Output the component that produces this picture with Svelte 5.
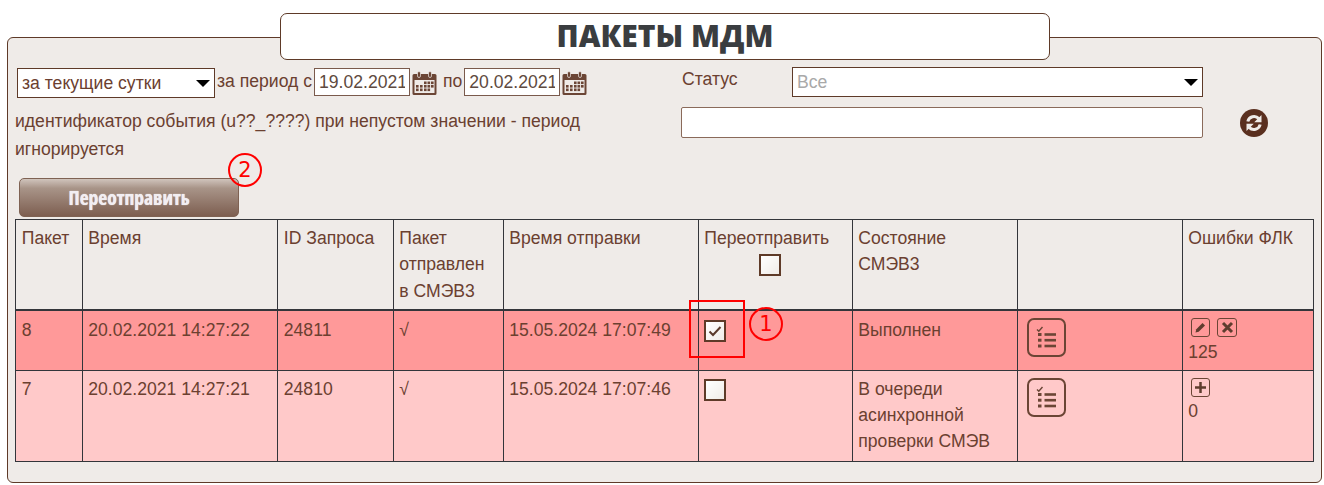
<script>
  const rows = [
    { id: '8', time: '20.02.2021 14:27:22', req: '24811', sent: '15.05.2024 17:07:49', checked: true, state: ['Выполнен'], cls: 'r1', errs: '125', edit: true },
    { id: '7', time: '20.02.2021 14:27:21', req: '24810', sent: '15.05.2024 17:07:46', checked: false, state: ['В очереди', 'асинхронной', 'проверки СМЭВ'], cls: 'r2', errs: '0', edit: false }
  ];
</script>

{#snippet cal()}
  <svg class="cal" width="25" height="24" viewBox="0 0 25 24">
    <path d="M2 3h21a1.500 1.500 0 0 1 1.500 1.500V22.500a1.500 1.500 0 0 1-1.500 1.500H2a1.500 1.500 0 0 1-1.500-1.500V4.500A1.500 1.500 0 0 1 2 3z" fill="#6b4535"/>
    <rect x="2.500" y="9" width="20" height="13" fill="#efebe8"/>
    <rect x="5.500" y="0.500" width="3" height="6" rx="1.500" fill="#6b4535" stroke="#efebe8" stroke-width="0.700"/>
    <rect x="16.500" y="0.500" width="3" height="6" rx="1.500" fill="#6b4535" stroke="#efebe8" stroke-width="0.700"/>
    <g fill="#6b4535">
      <rect x="12" y="10.500" width="2.600" height="2.600"/><rect x="15.500" y="10.500" width="2.600" height="2.600"/><rect x="19" y="10.500" width="2.600" height="2.600"/>
      <rect x="4" y="14" width="2.600" height="2.600"/><rect x="8" y="14" width="2.600" height="2.600"/><rect x="12" y="14" width="2.600" height="2.600"/><rect x="15.500" y="14" width="2.600" height="2.600"/><rect x="19" y="14" width="2.600" height="2.600"/>
      <rect x="4" y="17.500" width="2.600" height="2.600"/><rect x="8" y="17.500" width="2.600" height="2.600"/><rect x="12" y="17.500" width="2.600" height="2.600"/><rect x="15.500" y="17.500" width="2.600" height="2.600"/>
    </g>
  </svg>
{/snippet}

{#snippet listIcon()}
  <svg width="21" height="23" viewBox="0 0 21 23">
    <path d="M1 3.500l1.800 1.800L6.500 1" fill="none" stroke="#6b4535" stroke-width="1.400"/>
    <g fill="#6b4535">
      <rect x="2" y="7" width="3.500" height="3"/><rect x="2" y="12.700" width="3.500" height="3"/><rect x="2" y="18.500" width="3.500" height="3"/>
      <rect x="8.500" y="7.200" width="11.500" height="2.600"/><rect x="8.500" y="12.900" width="11.500" height="2.600"/><rect x="8.500" y="18.700" width="11.500" height="2.600"/>
    </g>
  </svg>
{/snippet}

<div class="page">
  <h1 class="title">ПАКЕТЫ МДМ</h1>
  <section class="panel">
    <div class="filters">
      <div class="left">
        <div class="period">
          <span class="selwrap"><select class="sel-period"><option>за текущие сутки</option></select><i class="arrow"></i></span>
          <span class="lbl">за период с</span>
          <input class="date" value="19.02.2021" />
          {@render cal()}
          <span class="lbl po">по</span>
          <input class="date" value="20.02.2021" />
          {@render cal()}
        </div>
        <p class="hint">идентификатор события (u??_????) при непустом значении - период игнорируется</p>
      </div>
      <div class="right">
        <div class="status">
          <span class="status-lbl">Статус</span>
          <span class="selwrap"><select class="sel-status"><option>Все</option></select><i class="arrow"></i></span>
        </div>
        <div class="search">
          <input class="event" />
          <svg class="refresh" width="28" height="28" viewBox="0 0 28 28">
            <circle cx="14" cy="14" r="14" fill="#5a2f1f"/>
            <g fill="none" stroke="#efebe8" stroke-width="3">
              <path d="M7.800 12.500A6.500 6.500 0 0 1 18.800 9.600"/>
              <path d="M20.200 15.500A6.500 6.500 0 0 1 9.200 18.400"/>
            </g>
            <path d="M21.500 6v7.300h-7.300zM6.500 22v-7.300h7.300z" fill="#efebe8"/>
          </svg>
        </div>
      </div>
    </div>

    <div class="action">
      <button class="resend">Переотправить</button>
      <span class="mark m2">2</span>
    </div>

    <table>
      <colgroup>
        <col style="width:67px" /><col style="width:195px" /><col style="width:116px" /><col style="width:110px" /><col style="width:195px" /><col style="width:154px" /><col style="width:165px" /><col style="width:165px" /><col style="width:131px" />
      </colgroup>
      <thead>
        <tr>
          <th>Пакет</th>
          <th>Время</th>
          <th>ID Запроса</th>
          <th>Пакет отправлен в СМЭВ3</th>
          <th>Время отправки</th>
          <th>Переотправить<span class="box head-box"></span></th>
          <th>Состояние СМЭВ3</th>
          <th></th>
          <th>Ошибки ФЛК</th>
        </tr>
      </thead>
      <tbody>
        {#each rows as r}
          <tr class={r.cls}>
            <td>{r.id}</td>
            <td>{r.time}</td>
            <td>{r.req}</td>
            <td>√</td>
            <td>{r.sent}</td>
            <td class="chk">
              <span class="box">
                {#if r.checked}
                  <svg width="14" height="12" viewBox="0 0 14 12"><path d="M1.500 6.500l3.500 3.500L12.500 2" fill="none" stroke="#5a3a2b" stroke-width="2"/></svg>
                {/if}
              </span>
              {#if r.checked}
                <span class="red-frame"></span>
                <span class="mark m1">1</span>
              {/if}
            </td>
            <td>{#each r.state as s}<div>{s}</div>{/each}</td>
            <td><button class="listbtn">{@render listIcon()}</button></td>
            <td>
              <div class="mini">
                {#if r.edit}
                  <button class="tiny"><svg width="13" height="13" viewBox="0 0 13 13"><path d="M1.500 11.500l0.800-3.200L8.500 2l2.500 2.500-6.300 6.200z" fill="#5f3d2e"/></svg></button>
                  <button class="tiny wide"><svg width="13" height="13" viewBox="0 0 13 13"><path d="M2 2l9 9M11 2l-9 9" stroke="#5f3d2e" stroke-width="3"/></svg></button>
                {:else}
                  <button class="tiny"><svg width="13" height="13" viewBox="0 0 13 13"><path d="M6.500 1v11M1 6.500h11" stroke="#5f3d2e" stroke-width="2.500"/></svg></button>
                {/if}
              </div>
              <div class="num">{r.errs}</div>
            </td>
          </tr>
        {/each}
      </tbody>
    </table>
  </section>
</div>

<style>
  :global(body) { margin: 0; background: #fff; }
  .page {
    width: 1324px; height: 485px; overflow: hidden; box-sizing: border-box;
    padding: 13px 2px 0 7px;
    font: 17.6px/26.4px "Liberation Sans", Arial, sans-serif;
    color: #6b4030;
  }
  .title {
    position: relative; z-index: 1; box-sizing: border-box;
    width: 770px; height: 47px; margin: 0 0 0 273px;
    background: #fff; border: 1px solid #5e3a28; border-radius: 7px;
    font: 800 30px/43px "Open Sans", sans-serif;
    color: #3a3d40; text-align: center;
  }
  .panel {
    box-sizing: border-box; height: 446px; margin-top: -23px; padding: 30px 8px 0 7px;
    background: #efebe8; border: 1px solid #5e3a28; border-radius: 6px;
  }
  .filters { display: flex; }
  .left { width: 666px; }
  .period { display: flex; align-items: center; height: 30px; padding-left: 2px; }
  .lbl { margin: 0 2px; line-height: 26px; position: relative; top: -2px; white-space: nowrap; }
  .po { margin: 0 2px 0 6px; }
  .selwrap { position: relative; display: block; flex: none; }
  .arrow {
    position: absolute; right: 5px; top: 12px; width: 0; height: 0; pointer-events: none;
    border-left: 7px solid transparent; border-right: 7px solid transparent; border-top: 7px solid #000;
  }
  select {
    display: block; appearance: none; box-sizing: border-box; background-color: #fff;
    border: 1px solid #5e3a28; border-radius: 0; padding: 0 0 0 4px;
    font: 17.6px "Liberation Sans", Arial, sans-serif; color: #6b4030;
  }
  .sel-period { width: 198px; height: 30px; }
  .date {
    box-sizing: border-box; width: 96px; height: 28px; padding: 0 4px; border: 1px solid #7a5a4c; border-radius: 0;
    font: 17.6px "Liberation Sans", Arial, sans-serif; color: #5e4a40; background: #fff; position: relative; top: -1px;
  }
  .cal { margin-left: 2px; flex: none; }
  .hint { margin: 10px 0 0; width: 600px; line-height: 27.5px; }
  .right { width: 620px; }
  .status { display: flex; height: 30px; margin-top: -1px; padding-left: 1px; }
  .status-lbl { width: 110px; line-height: 25px; }
  .sel-status { width: 411px; height: 30px; color: #a9a9a9; }
  .search { display: flex; align-items: center; margin-top: 10px; }
  .event {
    box-sizing: border-box; width: 522px; height: 31px; background: #fff; border: 1px solid #8a6a5a; border-radius: 2px;
  }
  .refresh { margin-left: 37px; }
  .action { position: relative; width: 230px; height: 39px; margin: 15px 0 0 4px; }
  .resend {
    display: block; width: 220px; height: 39px; border: 1px solid #7f6253; border-radius: 5px; padding: 0;
    background: linear-gradient(#d0c4bc 0%, #a89488 25%, #7d5e50 100%);
    color: #f2eef2; font: 700 19.5px/37px "Open Sans", sans-serif; font-stretch: 75%; text-shadow: 0 0 1px #fff;
  }
  .mark {
    position: absolute; box-sizing: border-box; width: 34px; height: 34px; border: 2px solid #f00; border-radius: 50%;
    color: #f00; font: 21px/31px "DejaVu Sans", sans-serif; text-align: center;
  }
  .m2 { left: 209px; top: -25px; }
  .m1 { left: 50px; top: -4px; }
  .red-frame { position: absolute; left: -10px; top: -11px; width: 52px; height: 54px; border: 2px solid #f00; }
  table {
    border-collapse: collapse; table-layout: fixed; width: 1298px; margin: 2px 0 0 0; color: #6b4030;
  }
  th, td { border: 1px solid #33353a; padding: 5px 5px 5px 5.300px; vertical-align: top; text-align: left; font-weight: 400; }
  th:nth-child(1), td:nth-child(1), th:nth-child(3), td:nth-child(3) { padding-left: 5.800px; }
  thead th { border-bottom: 2px solid #33353a; }
  tbody tr.r1 td { background: #ff9999; height: 47px; padding-top: 6px; padding-bottom: 4px; box-sizing: content-box; }
  tbody tr.r2 td { background: #ffc9c9; padding-top: 5px; padding-bottom: 6px; }
  .box {
    display: flex; align-items: center; justify-content: center; box-sizing: border-box;
    width: 22px; height: 22px; border: 2px solid #5e3a28; background: linear-gradient(135deg, #fff, #f0ece8);
  }
  .head-box { margin: 3px 0 0 55px; }
  .chk { position: relative; }
  .r1 .box { margin-top: 3px; }
  .r2 .box { margin-top: 3px; }
  .listbtn {
    display: flex; align-items: center; justify-content: center; box-sizing: border-box;
    width: 39px; height: 39px; margin: 1px 0 0 4px; padding: 0; background: transparent;
    border: 2px solid #6b4535; border-radius: 7px;
  }
  .r2 .listbtn { margin-top: 2px; }
  .mini { display: flex; gap: 7px; margin: 1px 0 0 3px; }
  .r2 .mini { margin-top: 2px; }
  .tiny {
    display: flex; align-items: center; justify-content: center; box-sizing: border-box;
    width: 19px; height: 19px; padding: 0; background: transparent; border: 1px solid #6b4535; border-radius: 3px;
  }
  .tiny.wide { width: 20px; }
  .num { margin-top: 2px; }
  .r2 .num { margin-top: 1px; }
</style>
